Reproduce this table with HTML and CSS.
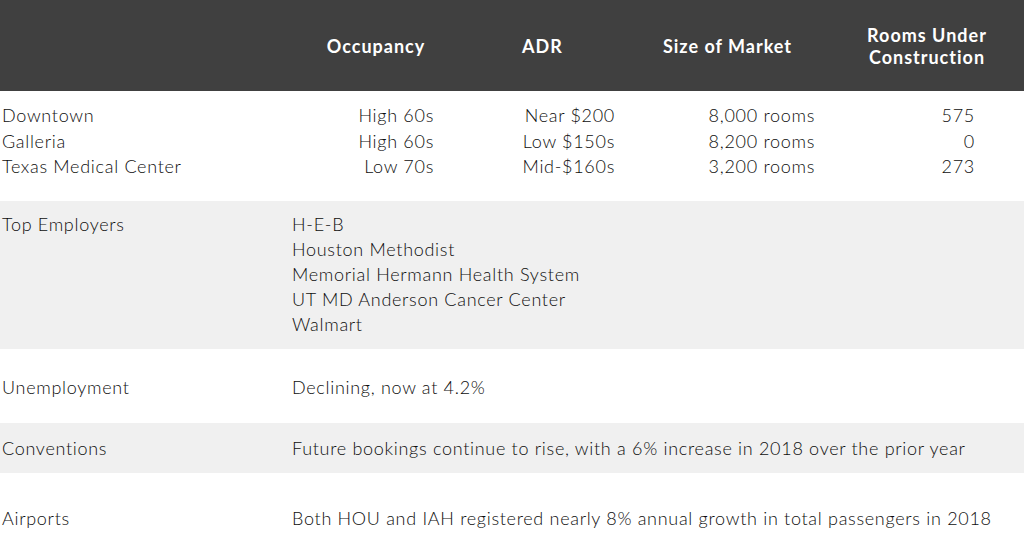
FILE: index.html
```html
<!DOCTYPE html>
<html>
<head>
<meta charset="utf-8">
<link rel="stylesheet" href="styles.css">
</head>
<body>
<div class="page">
  <div class="head row5">
    <div></div>
    <div class="hc">Occupancy</div>
    <div class="hc">ADR</div>
    <div class="hc">Size of Market</div>
    <div class="hc">Rooms Under<br>Construction</div>
  </div>
  <div class="markets">
    <div class="row5">
      <div class="lab">Downtown</div>
      <div class="c1">High 60s</div>
      <div class="c2">Near $200</div>
      <div class="c3">8,000 rooms</div>
      <div class="c4">575</div>
    </div>
    <div class="row5">
      <div class="lab">Galleria</div>
      <div class="c1">High 60s</div>
      <div class="c2">Low $150s</div>
      <div class="c3">8,200 rooms</div>
      <div class="c4">0</div>
    </div>
    <div class="row5">
      <div class="lab">Texas Medical Center</div>
      <div class="c1">Low 70s</div>
      <div class="c2">Mid-$160s</div>
      <div class="c3">3,200 rooms</div>
      <div class="c4">273</div>
    </div>
  </div>
  <div class="row2 gray employers">
    <div class="lab">Top Employers</div>
    <div class="list">
      <div>H-E-B</div>
      <div>Houston Methodist</div>
      <div>Memorial Hermann Health System</div>
      <div>UT MD Anderson Cancer Center</div>
      <div>Walmart</div>
    </div>
  </div>
  <div class="row2 unemp">
    <div class="lab">Unemployment</div>
    <div>Declining, now at 4.2%</div>
  </div>
  <div class="row2 gray conv">
    <div class="lab">Conventions</div>
    <div>Future bookings continue to rise, with a 6% increase in 2018 over the prior year</div>
  </div>
  <div class="row2 air">
    <div class="lab">Airports</div>
    <div>Both HOU and IAH registered nearly 8% annual growth in total passengers in 2018</div>
  </div>
</div>
</body>
</html>
```

FILE: styles.css
```css
html, body {
  margin: 0;
  padding: 0;
  background: #ffffff;
}
.page {
  width: 1024px;
  height: 540px;
  overflow: hidden;
  font-family: "Lato", "Liberation Sans", sans-serif;
  font-size: 18px;
  font-weight: 300;
  letter-spacing: 0.7px;
  color: #0e0e0e;
  line-height: 25.5px;
}
.row5 {
  display: grid;
  grid-template-columns: 292px 168px 165px 205px 194px;
}
.row2 {
  display: grid;
  grid-template-columns: 292px 1fr;
}
.head {
  height: 91px;
  background: #404040;
  color: #ffffff;
  font-weight: 700;
  font-size: 18px;
  letter-spacing: 1px;
  line-height: 22px;
  align-items: center;
}
.hc {
  text-align: center;
}
.lab {
  padding-left: 2px;
}
.markets {
  padding: 12px 0 21px;
}
.c1, .c2, .c3, .c4 {
  text-align: right;
}
.c1 { padding-right: 26px; }
.c2 { padding-right: 10px; }
.c3 { padding-right: 15px; }
.c4 { padding-right: 49px; }
.gray {
  background: #f0f0f0;
}
.employers {
  padding: 11px 0 12px;
  line-height: 25px;
}
.unemp {
  padding: 26px 0 23px;
  line-height: 25px;
}
.conv {
  padding: 13px 0 12px;
  line-height: 25px;
}
.air {
  padding: 33px 0 20px;
  line-height: 25px;
}
```
